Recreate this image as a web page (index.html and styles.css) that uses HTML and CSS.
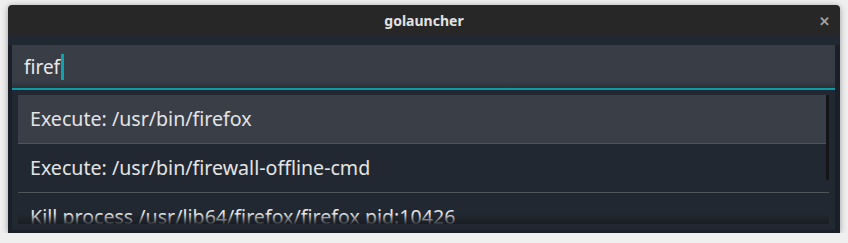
FILE: index.html
```html
<!DOCTYPE html>
<html lang="en">
<head>
  <meta charset="UTF-8">
  <title>golauncher</title>
  <link rel="stylesheet" href="styles.css">
</head>
<body>

  <!-- Window -->
  <div class="window">
    <div class="titlebar">
      <span class="title">golauncher</span>
      <span class="close">&#x2715;</span>
    </div>

    <div class="content">
      <div class="frame">
        <!-- Search box -->
        <div class="search">
          <span class="query">firef</span><span class="cursor"></span>
        </div>

        <!-- Results -->
        <div class="results">
          <div class="list">
            <div class="item selected">Execute: /usr/bin/firefox</div>
            <div class="item">Execute: /usr/bin/firewall-offline-cmd</div>
            <div class="item">Kill process /usr/lib64/firefox/firefox pid:10426</div>
            <div class="scrollbar"></div>
            <div class="fade"></div>
          </div>
        </div>
      </div>
    </div>
  </div>

</body>
</html>
```

FILE: styles.css
```css
/* General */
body {
  margin: 0;
  padding: 0;
  background-color: #efefef;
  font-family: "Noto Sans", "Open Sans", sans-serif;
}

/* Window */
.window {
  width: 832px;
  height: 228px;
  margin: 5px 0 0 8px;
  border-radius: 4px 4px 0 0;
  overflow: hidden;
  box-shadow: 0 1px 6px rgba(0, 0, 0, 0.35);
  display: flex;
  flex-direction: column;
}

.titlebar {
  flex-shrink: 0;
  height: 31px;
  background-color: #272727;
  display: flex;
  align-items: center;
  justify-content: center;
  position: relative;
}

.title {
  color: #e2e2e2;
  font-size: 14px;
  font-weight: bold;
}

.close {
  position: absolute;
  right: 10px;
  top: 7px;
  color: #a0a0a0;
  font-size: 13px;
  font-weight: bold;
}

.content {
  flex: 1;
  min-height: 0;
  background-color: #222831;
  padding-top: 9px;
  display: flex;
  flex-direction: column;
}

.frame {
  flex: 1;
  min-height: 0;
  background-color: #1b1f27;
  padding: 0 5px 3px 4px;
  display: flex;
  flex-direction: column;
}

/* Search box */
.search {
  flex-shrink: 0;
  height: 43px;
  background: linear-gradient(to bottom, #393d46 0%, #393d46 85%, #2d3037 100%);
  border-bottom: 2px solid #0d9aa5;
  display: flex;
  align-items: center;
  padding-left: 12px;
  color: #e8e8e8;
  font-size: 19px;
}

.cursor {
  width: 3px;
  height: 26px;
  margin-left: 1px;
  background-color: #0ea3ad;
}

/* Results */
.results {
  flex: 1;
  min-height: 0;
  background-color: #222831;
  padding: 5px 6px 6px 6px;
  display: flex;
}

.list {
  flex: 1;
  position: relative;
  overflow: hidden;
}

.item {
  height: 48px;
  line-height: 48px;
  padding-left: 12px;
  border-bottom: 1px solid #50545b;
  color: #e4e4e4;
  font-size: 19.6px;
  white-space: nowrap;
}

.item.selected {
  background-color: #3a3e47;
}

.scrollbar {
  position: absolute;
  right: 0;
  top: 0;
  width: 3px;
  height: 85px;
  background-color: #141517;
}

.fade {
  position: absolute;
  left: 0;
  right: 0;
  bottom: 0;
  height: 10px;
  background: linear-gradient(to bottom, rgba(24, 28, 34, 0), rgba(24, 28, 34, 0.9));
}
```
